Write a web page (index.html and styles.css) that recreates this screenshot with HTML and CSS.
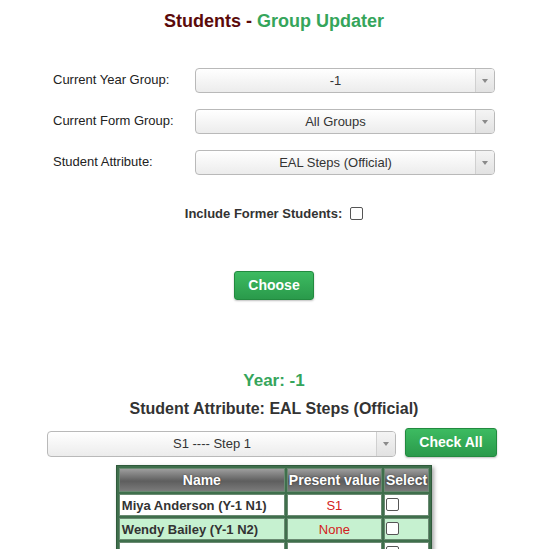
FILE: index.html
```html
<!doctype html>
<html lang="en">
<head>
	<meta charset="UTF-8">
	<title>Students - Group Updater</title>
	<link rel="stylesheet" href="styles.css">
</head>
<body>
	<div id="page">
		<h1 class="title"><span class="dark">Students - </span><span class="green">Group Updater</span></h1>

		<div class="form">
			<div class="form-row">
				<label>Current Year Group:</label>
				<div class="dropdown"><span class="dropdown-text">-1</span><span class="dropdown-arrow"></span></div>
			</div>
			<div class="form-row">
				<label>Current Form Group:</label>
				<div class="dropdown"><span class="dropdown-text">All Groups</span><span class="dropdown-arrow"></span></div>
			</div>
			<div class="form-row">
				<label>Student Attribute:</label>
				<div class="dropdown"><span class="dropdown-text">EAL Steps (Official)</span><span class="dropdown-arrow"></span></div>
			</div>
		</div>

		<div class="former">
			<span>Include Former Students:</span>
			<span class="box"></span>
		</div>

		<div class="choose-wrap">
			<a class="btn choose" href="javascript:void(0);">Choose</a>
		</div>

		<h2 class="year">Year: -1</h2>
		<h3 class="attr">Student Attribute: EAL Steps (Official)</h3>

		<div class="value-row">
			<div class="dropdown wide"><span class="dropdown-text">S1 ---- Step 1</span><span class="dropdown-arrow"></span></div>
			<a class="btn check-all" href="javascript:void(0);">Check All</a>
		</div>

		<table class="students">
			<tr>
				<th class="c-name">Name</th>
				<th class="c-val">Present value</th>
				<th class="c-sel">Select</th>
			</tr>
			<tr>
				<td class="name">Miya Anderson (Y-1 N1)</td>
				<td class="val">S1</td>
				<td class="sel"><span class="box"></span></td>
			</tr>
			<tr class="alt">
				<td class="name">Wendy Bailey (Y-1 N2)</td>
				<td class="val">None</td>
				<td class="sel"><span class="box"></span></td>
			</tr>
			<tr>
				<td class="name">&nbsp;</td>
				<td class="val">&nbsp;</td>
				<td class="sel"><span class="box"></span></td>
			</tr>
		</table>
	</div>
</body>
</html>
```

FILE: styles.css
```css
html, body {
	margin: 0;
	padding: 0;
	background: #fff;
}
body {
	font-family: "Liberation Sans", Arial, sans-serif;
	font-size: 13px;
	color: #333;
	overflow: hidden;
}
#page {
	padding-left: 3px;
}
.title {
	margin: 10px 0 0;
	font-size: 18px;
	line-height: 22px;
	text-align: center;
}
.title .dark {
	color: #5b0a0a;
}
.title .green {
	color: #35a55b;
}
.form {
	width: 442px;
	margin: 36px auto 0;
	display: flex;
	flex-direction: column;
	gap: 16px;
}
.form-row {
	display: flex;
	align-items: center;
}
.form-row label {
	width: 142px;
	flex: none;
	color: #222;
	margin-top: -2px;
}
.dropdown {
	flex: 1;
	height: 23px;
	display: flex;
	border: 1px solid #b9b9b9;
	border-radius: 4px;
	background: linear-gradient(#fff, #ececec);
	overflow: hidden;
}
.dropdown-text {
	flex: 1;
	text-align: center;
	line-height: 23px;
	font-size: 13px;
	color: #333;
}
.dropdown-arrow {
	width: 18px;
	border-left: 1px solid #d0d0d0;
	background: linear-gradient(#f4f4f4, #e2e2e2);
	position: relative;
}
.dropdown-arrow:after {
	content: "";
	position: absolute;
	left: 6px;
	top: 10px;
	border-left: 3px solid transparent;
	border-right: 3px solid transparent;
	border-top: 4px solid #8a8a8a;
}
.former {
	margin-top: 30px;
	display: flex;
	justify-content: center;
	align-items: center;
	gap: 8px;
	font-weight: bold;
	color: #333;
	height: 16px;
}
.box {
	display: inline-block;
	width: 11px;
	height: 11px;
	border: 1px solid #555;
	border-radius: 2px;
	background: #fff;
}
.choose-wrap {
	margin-top: 50px;
	text-align: center;
}
a {
	text-decoration: none;
}
.btn {
	display: inline-block;
	box-sizing: border-box;
	color: #fff;
	font-weight: bold;
	font-size: 14px;
	text-align: center;
	border: 1px solid #228a3f;
	border-radius: 3px;
	background: linear-gradient(#3dbb61, #2a9a4b);
	box-shadow: 0 1px 2px rgba(0, 0, 0, .25);
}
.choose {
	width: 80px;
	height: 29px;
	line-height: 27px;
}
.year {
	margin: 71px 0 0;
	font-size: 17px;
	line-height: 20px;
	color: #35a55b;
	text-align: center;
}
.attr {
	margin: 9px 0 0;
	font-size: 16px;
	line-height: 18px;
	color: #333;
	text-align: center;
}
.value-row {
	width: 450px;
	padding-right: 4px;
	margin: 10px auto 0;
	display: flex;
	align-items: flex-start;
	gap: 9px;
}
.dropdown.wide {
	margin-top: 3px;
	flex: none;
	width: 347px;
	height: 24px;
}
.dropdown.wide .dropdown-text {
	line-height: 24px;
}
.check-all {
	width: 93px;
	height: 29px;
	line-height: 27px;
}
.students {
	margin: 8px auto 0;
	border-collapse: separate;
	border-spacing: 2px;
	background: #3f6f4c;
	border: 1px solid #2f5a3b;
	box-shadow: 2px 2px 4px rgba(0, 0, 0, .35);
}
.students th {
	height: 22px;
	padding: 0 1px;
	color: #fff;
	font-size: 14px;
	white-space: nowrap;
	text-shadow: 0 0 2px rgba(0, 0, 0, .5);
	background: linear-gradient(#9d9d9d, #5e5e5e 55%, #7a7a7a);
	border: 1px solid #6a8a72;
}
.students td {
	height: 20px;
	padding: 0 2px;
	white-space: nowrap;
	background: #fff;
	border: 1px solid #6a8a72;
}
.students tr.alt td {
	background: #c6f1d0;
}
.c-name {
	width: 162px;
}
.c-val {
	width: 86px;
}
.c-sel {
	width: 40px;
}
.students td.name {
	font-weight: bold;
	color: #333;
}
.students td.val {
	text-align: center;
	color: #d42020;
}
.students td.sel {
	padding: 0 1px;
}
.students td.sel .box {
	display: block;
	margin-top: -2px;
}
```
